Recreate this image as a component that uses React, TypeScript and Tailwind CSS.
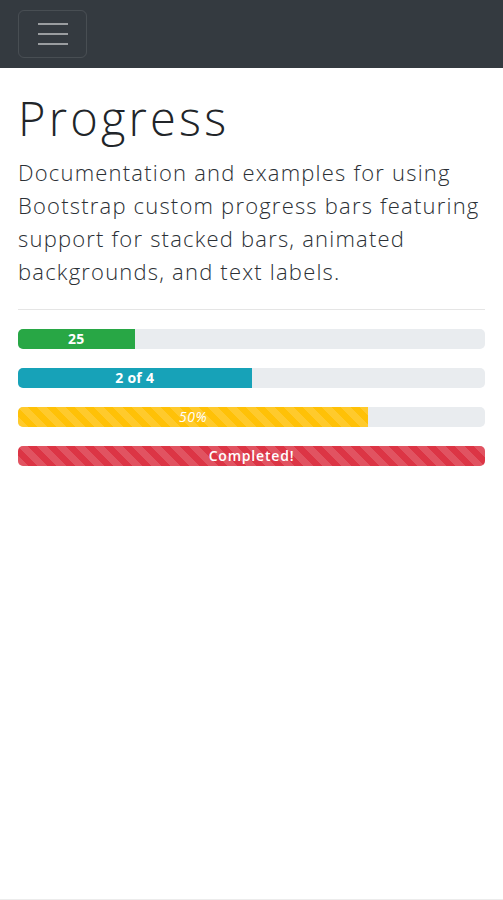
import React from "react";

const stripes =
  "bg-[linear-gradient(45deg,rgba(255,255,255,.15)_25%,transparent_25%,transparent_50%,rgba(255,255,255,.15)_50%,rgba(255,255,255,.15)_75%,transparent_75%,transparent)] bg-[length:19px_19px]";

export default function App() {
  return (
    <div className="min-h-[900px] bg-white font-['Open_Sans',sans-serif] text-[#212529] border-b border-[#ececec]">
      <nav className="h-[68px] bg-[#343a40] px-[18px] flex items-center">
        <button className="w-[69px] h-[48px] rounded-[6px] border border-[rgba(255,255,255,0.1)] flex flex-col items-center justify-center gap-[8px]">
          <span className="block w-[30px] h-[2px] bg-[rgba(255,255,255,0.5)]" />
          <span className="block w-[30px] h-[2px] bg-[rgba(255,255,255,0.5)]" />
          <span className="block w-[30px] h-[2px] bg-[rgba(255,255,255,0.5)]" />
        </button>
      </nav>
      <main className="px-[18px] pt-[22px]">
        <h1 className="text-[47px] leading-[56px] font-light tracking-[3.2px]">Progress</h1>
        <p className="mt-[10px] text-[22px] leading-[33px] font-light tracking-[1.2px] text-[#2b3035]">
          Documentation and examples for using Bootstrap custom progress bars featuring support for stacked bars, animated backgrounds, and text labels.
        </p>
        <hr className="mt-[21px] border-t border-[#e5e5e5]" />
        <div className="mt-[19px] flex flex-col gap-[19.5px]">
          <div className="h-[19.5px] rounded-[5px] bg-[#e9ecef] overflow-hidden flex">
            <div className="w-1/4 bg-[#28a745] text-white text-[14px] font-bold tracking-[0.3px] flex items-center justify-center">25</div>
          </div>
          <div className="h-[19.5px] rounded-[5px] bg-[#e9ecef] overflow-hidden flex">
            <div className="w-1/2 bg-[#17a2b8] text-white text-[14px] font-bold tracking-[0.3px] flex items-center justify-center">2 of 4</div>
          </div>
          <div className="h-[19.5px] rounded-[5px] bg-[#e9ecef] overflow-hidden flex">
            <div className={`w-3/4 bg-[#ffc107] ${stripes} text-white text-[14px] italic tracking-[0.5px] flex items-center justify-center`}>50%</div>
          </div>
          <div className="h-[19.5px] rounded-[5px] bg-[#e9ecef] overflow-hidden flex">
            <div className={`w-full bg-[#dc3545] ${stripes} text-white text-[14px] font-semibold tracking-[0.8px] flex items-center justify-center`}>Completed!</div>
          </div>
        </div>
      </main>
    </div>
  );
}
